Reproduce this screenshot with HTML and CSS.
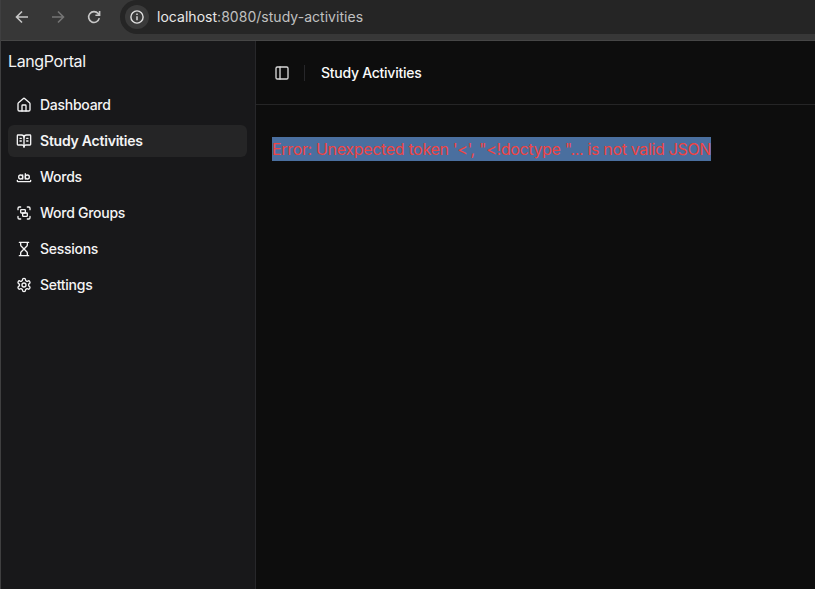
FILE: index.html
```html
<!DOCTYPE html>
<html lang="en">
<head>
<meta charset="utf-8">
<title>LangPortal</title>
<link rel="stylesheet" href="styles.css">
</head>
<body>
<div class="window">
  <div class="toolbar">
    <svg class="nav" viewBox="0 0 16 16"><path d="M14 8H2.8M8 2.5 2.5 8 8 13.5"/></svg>
    <svg class="nav disabled" viewBox="0 0 16 16"><path d="M2 8h11.2M8 2.5 13.5 8 8 13.5"/></svg>
    <svg class="nav" viewBox="0 0 16 16"><path d="M13.3 9.2A5.4 5.4 0 1 1 12.2 4.6L13.6 6M13.6 2v4.2H9.4"/></svg>
    <div class="address">
      <span class="info"><svg viewBox="0 0 16 16"><circle cx="8" cy="8" r="6.1"/><path d="M8 7.3v4M8 4.4v1.6"/></svg></span>
      <span class="url"><b>localhost</b>:8080/study-activities</span>
    </div>
  </div>
  <div class="page">
    <aside class="sidebar">
      <div class="brand"><span>LangPortal</span></div>
      <nav class="menu">
        <a class="item"><svg viewBox="0 0 24 24"><path d="M15 21v-8a1 1 0 0 0-1-1h-4a1 1 0 0 0-1 1v8"/><path d="M3 10a2 2 0 0 1 .709-1.528l7-5.999a2 2 0 0 1 2.582 0l7 5.999A2 2 0 0 1 21 10v9a2 2 0 0 1-2 2H5a2 2 0 0 1-2-2z"/></svg><span>Dashboard</span></a>
        <a class="item active"><svg viewBox="0 0 24 24"><path d="M12 7v14M16 12h2M16 8h2M6 12h2M6 8h2"/><path d="M3 18a1 1 0 0 1-1-1V4a1 1 0 0 1 1-1h5a4 4 0 0 1 4 4 4 4 0 0 1 4-4h5a1 1 0 0 1 1 1v13a1 1 0 0 1-1 1h-6a3 3 0 0 0-3 3 3 3 0 0 0-3-3z"/></svg><span>Study Activities</span></a>
        <a class="item"><svg viewBox="0 0 24 24"><circle cx="7" cy="12" r="3"/><path d="M10 9v6"/><circle cx="17" cy="12" r="3"/><path d="M14 7v8M22 17v1c0 .5-.5 1-1 1H3c-.5 0-1-.5-1-1v-1"/></svg><span>Words</span></a>
        <a class="item"><svg viewBox="0 0 24 24"><path d="M3 7V5c0-1.100.9-2 2-2h2M17 3h2c1.100 0 2 .9 2 2v2M21 17v2c0 1.100-.9 2-2 2h-2M7 21H5c-1.100 0-2-.9-2-2v-2"/><rect width="7" height="5" x="7" y="7" rx="1"/><rect width="7" height="5" x="10" y="12" rx="1"/></svg><span>Word Groups</span></a>
        <a class="item"><svg viewBox="0 0 24 24"><path d="M5 22h14M5 2h14M17 22v-4.172a2 2 0 0 0-.586-1.414L12 12l-4.414 4.414A2 2 0 0 0 7 17.828V22M7 2v4.172a2 2 0 0 0 .586 1.414L12 12l4.414-4.414A2 2 0 0 0 17 6.172V2"/></svg><span>Sessions</span></a>
        <a class="item"><svg viewBox="0 0 24 24"><path d="M12.220 2h-.44a2 2 0 0 0-2 2v.18a2 2 0 0 1-1 1.730l-.43.25a2 2 0 0 1-2 0l-.15-.08a2 2 0 0 0-2.730.73l-.22.38a2 2 0 0 0 .73 2.730l.15.1a2 2 0 0 1 1 1.720v.51a2 2 0 0 1-1 1.740l-.15.09a2 2 0 0 0-.73 2.730l.22.38a2 2 0 0 0 2.730.73l.15-.08a2 2 0 0 1 2 0l.43.25a2 2 0 0 1 1 1.730V20a2 2 0 0 0 2 2h.44a2 2 0 0 0 2-2v-.18a2 2 0 0 1 1-1.730l.43-.25a2 2 0 0 1 2 0l.15.08a2 2 0 0 0 2.730-.73l.22-.39a2 2 0 0 0-.73-2.730l-.15-.08a2 2 0 0 1-1-1.740v-.5a2 2 0 0 1 1-1.740l.15-.09a2 2 0 0 0 .73-2.730l-.22-.38a2 2 0 0 0-2.730-.73l-.15.08a2 2 0 0 1-2 0l-.43-.25a2 2 0 0 1-1-1.730V4a2 2 0 0 0-2-2z"/><circle cx="12" cy="12" r="3"/></svg><span>Settings</span></a>
      </nav>
    </aside>
    <main class="content">
      <header class="header">
        <svg class="panel" viewBox="0 0 24 24"><rect width="18" height="18" x="3" y="3" rx="2"/><path d="M9 3v18"/></svg>
        <span class="separator"></span>
        <h1>Study Activities</h1>
      </header>
      <div class="body"><span class="error">Error: Unexpected token '&lt;', "&lt;!doctype "... is not valid JSON</span></div>
    </main>
  </div>
</div>
</body>
</html>
```
FILE: styles.css
```css
* { box-sizing: border-box; }
body { margin: 0; background: #0d0d0d; font-family: Inter, "Liberation Sans", sans-serif; color: #f4f4f5; }
svg { fill: none; stroke: currentColor; stroke-width: 2; stroke-linecap: round; stroke-linejoin: round; flex: none; }
.window { height: 589px; border-left: 1px solid #3f3f40; display: flex; flex-direction: column; overflow: hidden; }
.toolbar { height: 41px; flex: none; background: #373737; border-bottom: 1px solid #464646; display: flex; align-items: flex-start; padding-left: 13px; gap: 20px; color: #c7c7c7; }
.nav { width: 16px; height: 16px; margin-top: 9px; stroke-width: 1.6; stroke-linecap: butt; stroke-linejoin: miter; }
.disabled { color: #757575; }
.address { flex: 1; height: 34px; margin-left: -2px; background: #252525; border-radius: 17px 0 0 17px; display: flex; align-items: center; padding-left: 5px; gap: 8px; }
.info { width: 24px; height: 24px; border-radius: 50%; background: #3a3a3a; display: grid; place-items: center; color: #e0e0e0; }
.info svg { width: 16px; height: 16px; stroke-width: 1.4; stroke-linecap: butt; }
.url { font-size: 14px; letter-spacing: 0.03px; color: #c0c0c0; white-space: nowrap; padding-bottom: 2px; }
.url b { font-weight: 400; color: #e8e8e8; }
.page { flex: 1; display: flex; }
.sidebar { width: 255px; flex: none; background: #18181a; border-right: 1px solid #27272a; padding: 8px 8px 8px 7px; }
.brand { font-size: 16px; line-height: 24px; letter-spacing: -0.38px; }
.menu { display: flex; flex-direction: column; gap: 4px; margin-top: 16px; }
.item { height: 32px; padding: 0 8px; border-radius: 6px; display: flex; align-items: center; gap: 8px; font-size: 14px; font-weight: 450; letter-spacing: -0.27px; }
.item span { padding-bottom: 2px; }
.item svg { width: 16px; height: 16px; }
.active { background: #252526; font-weight: 600; letter-spacing: -0.23px; }
.content { flex: 1; min-width: 0; background: #0d0d0d; }
.header { height: 64px; border-bottom: 1px solid #252526; display: flex; align-items: center; padding-left: 18px; }
.panel { width: 16px; height: 16px; color: #d8d8d8; }
.separator { width: 1px; height: 16px; background: #27272a; margin: 0 16px 0 14px; }
h1 { margin: 0; font-size: 14px; font-weight: 500; letter-spacing: -0.26px; color: #fafafa; }
.body { padding: 32px 16px; display: flex; }
.error { background: #4a6f9f; color: #ef4444; font-size: 16px; line-height: 24px; letter-spacing: -0.335px; white-space: nowrap; }
```
